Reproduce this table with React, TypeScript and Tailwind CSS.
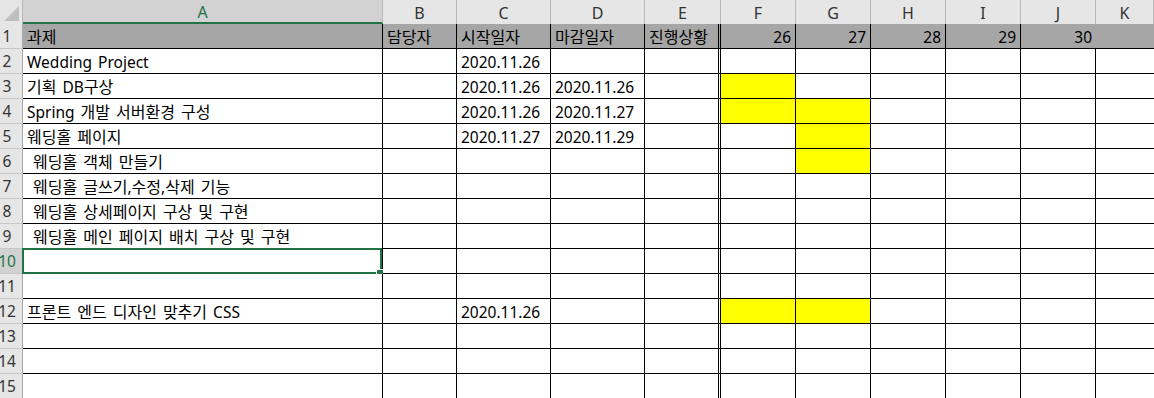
import React from "react";

const COLS = ["A", "B", "C", "D", "E", "F", "G", "H", "I", "J", "K"];

type Row = {
  a?: string;
  c?: string;
  d?: string;
  yellow?: string[];
};

const ROWS: Row[] = [
  {},
  { a: "Wedding Project", c: "2020.11.26" },
  { a: "기획 DB구상", c: "2020.11.26", d: "2020.11.26", yellow: ["F"] },
  { a: "Spring 개발 서버환경 구성", c: "2020.11.26", d: "2020.11.27", yellow: ["F", "G"] },
  { a: "웨딩홀 페이지", c: "2020.11.27", d: "2020.11.29", yellow: ["G"] },
  { a: " 웨딩홀 객체 만들기", yellow: ["G"] },
  { a: " 웨딩홀 글쓰기,수정,삭제 기능" },
  { a: " 웨딩홀 상세페이지 구상 및 구현" },
  { a: " 웨딩홀 메인 페이지 배치 구상 및 구현" },
  {},
  {},
  { a: "프론트 엔드 디자인 맞추기 CSS", c: "2020.11.26", yellow: ["F", "G"] },
  {},
  {},
  {},
];

const HEADER1: Record<string, string> = {
  A: "과제",
  B: "담당자",
  C: "시작일자",
  D: "마감일자",
  E: "진행상황",
  F: "26",
  G: "27",
  H: "28",
  I: "29",
  J: "30",
};

const FONT = { fontFamily: '"Noto Sans", "Noto Sans CJK KR", sans-serif' };
const KFONT = { fontFamily: '"Noto Sans CJK KR", "Noto Sans", sans-serif' };

function MixedText({ text }: { text: string }) {
  const parts = text.split(/([\uAC00-\uD7A3]+)/);
  return (
    <>
      {parts.map((p, i) =>
        /[\uAC00-\uD7A3]/.test(p) ? (
          <span key={i} className="text-[16px] leading-none" style={KFONT}>
            {p}
          </span>
        ) : (
          <span key={i}>{p}</span>
        )
      )}
    </>
  );
}

function cellBorder(col: string, row: number) {
  if (col === "E") return "border-r-[3px] border-double border-r-black border-b border-b-black";
  if (col === "K") return "border-b border-b-black";
  if (row === 1 && col === "J") return "border-b border-b-black";
  return "border-r border-r-black border-b border-b-black";
}

export default function App() {
  return (
    <div
      className="w-[1154px] h-[398px] overflow-hidden bg-white text-black text-[15.5px]"
      style={FONT}
    >
      <div className="grid grid-cols-[23px_360px_74px_94px_94px_76px_75px_75px_75px_75px_75px_1fr] grid-rows-[24px_repeat(15,25px)]">
        {/* corner */}
        <div className="bg-[#e6e6e6] border-r border-r-[#b8b8b8] flex items-end justify-end pr-[3px] pb-[3px]">
          <svg width="15" height="15" viewBox="0 0 15 15">
            <polygon points="15,0 15,15 0,15" fill="#bfbfbf" />
          </svg>
        </div>
        {/* column headers */}
        {COLS.map((c) =>
          c === "A" ? (
            <div
              key={c}
              className="bg-[#d2d2d2] border-r border-r-[#b8b8b8] border-b-2 border-b-[#217346] flex items-center justify-center text-[#217346] text-[16px] leading-none pt-[1px]"
            >
              {c}
            </div>
          ) : (
            <div
              key={c}
              className="bg-[#e6e6e6] border-r border-r-[#b8b8b8] flex items-center justify-center text-[#333] text-[16px] leading-none pt-[1px]"
            >
              {c}
            </div>
          )
        )}

        {ROWS.map((r, i) => {
          const rowNum = i + 1;
          const selected = rowNum === 10;
          return (
            <React.Fragment key={rowNum}>
              <div
                className={
                  "overflow-hidden border-r border-b flex items-center " +
                  (selected
                    ? "bg-[#d2d2d2] text-[#217346] border-r-[#217346] border-b-[#c4c4c4]"
                    : "bg-[#e6e6e6] text-[#333] border-r-[#a8a8a8] border-b-[#c8c8c8]")
                }
              >
                <div className="w-[32px] shrink-0 -ml-[9px] text-center leading-none pt-[1px]">
                  {rowNum}
                </div>
              </div>
              {COLS.map((c) => {
                const isHeader = rowNum === 1;
                const yellow = r.yellow?.includes(c);
                let text: string | undefined;
                let right = false;
                if (isHeader) {
                  text = HEADER1[c];
                  right = ["F", "G", "H", "I", "J"].includes(c);
                } else if (c === "A") text = r.a;
                else if (c === "C") text = r.c;
                else if (c === "D") text = r.d;
                const bg = isHeader ? "bg-[#a6a6a6]" : yellow ? "bg-[#ffff00]" : "bg-white";
                return (
                  <div
                    key={c}
                    className={
                      "relative flex items-center whitespace-pre leading-[24px] pt-[1px] [word-spacing:2px] " +
                      (right ? "justify-end pr-[4px] " : "pl-[4px] ") +
                      bg +
                      " " +
                      cellBorder(c, rowNum)
                    }
                  >
                    {text && (
                      <span className="leading-[24px]">
                        <MixedText text={text} />
                      </span>
                    )}
                    {selected && c === "A" && (
                      <div className="absolute -top-px -left-px right-0 -bottom-px border-2 border-[#217346]">
                        <div className="absolute -right-[4px] -bottom-[5px] w-[8px] h-[8px] bg-[#217346] border border-white" />
                      </div>
                    )}
                  </div>
                );
              })}
            </React.Fragment>
          );
        })}
      </div>
    </div>
  );
}
